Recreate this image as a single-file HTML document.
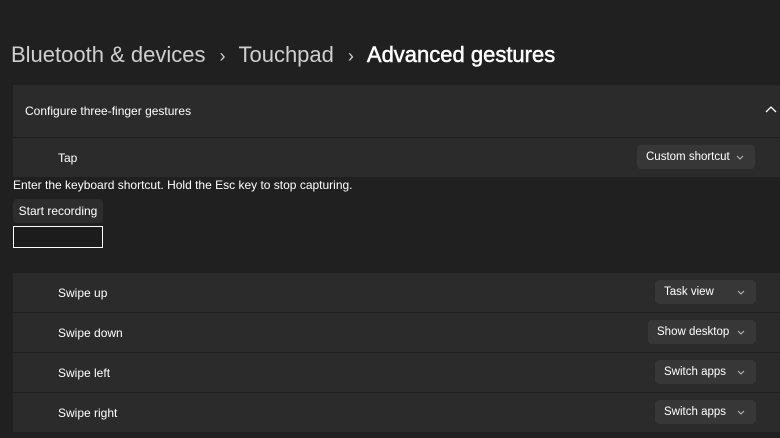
<!DOCTYPE html>
<html><head><style>
body{margin:0;width:780px;height:438px;background:#202020;font-family:"Segoe UI","Liberation Sans",sans-serif;color:#fff;overflow:hidden;position:relative}
.a{position:absolute}
.t{font-size:22px;top:42px;left:11px;white-space:nowrap;color:#cfcfcf}
.t b{color:#fff;font-weight:normal;-webkit-text-stroke:0.5px #fff}
.t span{margin:0 13px 0 14px;font-size:18px}
.row{position:absolute;left:13px;width:767px;background:#2b2b2b}
.lbl{position:absolute;font-size:12px;color:#fff}
.dd{position:absolute;background:#373737;border-radius:4px;height:24px;font-size:11.5px;line-height:24px;color:#fff;box-sizing:border-box;padding-left:9px}
.dd svg{position:absolute;right:11px;top:10px}
</style></head><body>
<div class="a t">Bluetooth &amp; devices<span>›</span>Touchpad<span>›</span><b>Advanced gestures</b></div>
<div class="row" style="top:85px;height:52px"></div>
<div class="lbl" style="left:25px;top:104px">Configure three-finger gestures</div>
<svg class="a" style="left:765px;top:106px" width="12" height="8"><path d="M1 6L6 1L11 6" stroke="#fff" stroke-width="1.3" fill="none"/></svg>
<div class="row" style="top:138px;height:39px"></div>
<div class="lbl" style="left:58px;top:151px">Tap</div>
<div class="dd" style="left:637px;top:145px;width:118px">Custom shortcut<svg width="8" height="5"><path d="M1 1L4 4L7 1" stroke="#bbb" fill="none"/></svg></div>
<div class="lbl" style="left:13px;top:178px">Enter the keyboard shortcut. Hold the Esc key to stop capturing.</div>
<div class="a" style="left:13px;top:199px;width:90px;height:24px;background:#2d2d2d;border-radius:4px;font-size:12px;line-height:24px;text-align:center">Start recording</div>
<div class="a" style="left:13px;top:226px;width:90px;height:22px;border:1px solid #fff;box-sizing:border-box;background:#1c1c1c"></div>
<div class="row" style="top:273px;height:39px"></div>
<div class="row" style="top:313px;height:39px"></div>
<div class="row" style="top:353px;height:39px"></div>
<div class="row" style="top:393px;height:39px"></div>
<div class="lbl" style="left:58px;top:286px">Swipe up</div>
<div class="lbl" style="left:58px;top:326px">Swipe down</div>
<div class="lbl" style="left:58px;top:366px">Swipe left</div>
<div class="lbl" style="left:58px;top:406px">Swipe right</div>
<div class="dd" style="left:655px;top:280px;width:101px">Task view<svg width="8" height="5"><path d="M1 1L4 4L7 1" stroke="#bbb" fill="none"/></svg></div>
<div class="dd" style="left:648px;top:320px;width:108px">Show desktop<svg width="8" height="5"><path d="M1 1L4 4L7 1" stroke="#bbb" fill="none"/></svg></div>
<div class="dd" style="left:655px;top:360px;width:101px">Switch apps<svg width="8" height="5"><path d="M1 1L4 4L7 1" stroke="#bbb" fill="none"/></svg></div>
<div class="dd" style="left:655px;top:400px;width:101px">Switch apps<svg width="8" height="5"><path d="M1 1L4 4L7 1" stroke="#bbb" fill="none"/></svg></div>
</body></html>
